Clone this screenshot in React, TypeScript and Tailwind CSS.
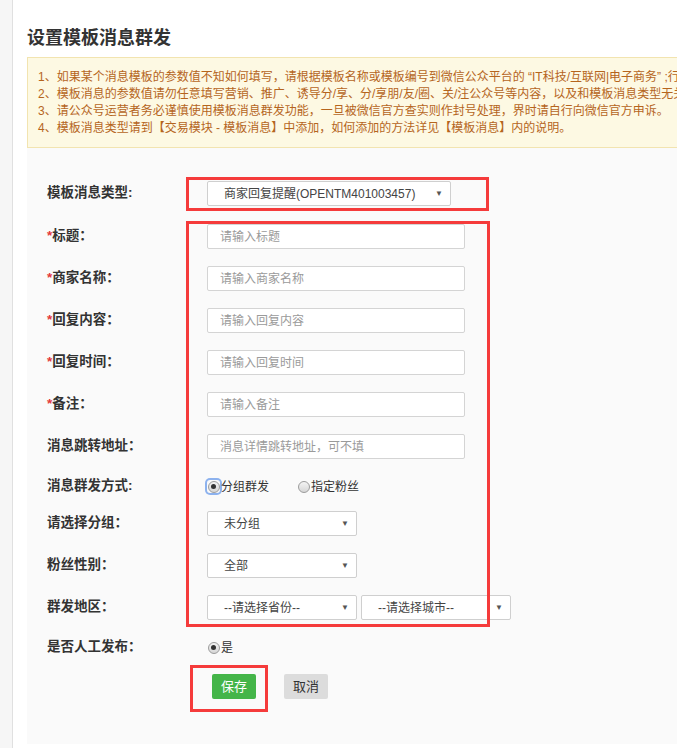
import React from "react";

const FONT = { fontFamily: '"Liberation Sans", "Noto Sans CJK SC", sans-serif' };

const Select = ({ text, w }: { text: string; w: string }) => (
  <div
    className={`${w} h-[25px] flex items-center justify-between bg-white border border-[#cfcfcf] rounded-[2px] pl-[16px] pr-[7px] text-[12px] text-[#444]`}
  >
    <span>{text}</span>
    <span className="text-[8px] text-[#555]">▼</span>
  </div>
);

const Input = ({ placeholder }: { placeholder: string }) => (
  <input
    placeholder={placeholder}
    className="w-[258px] h-[25px] bg-white border border-[#d4d4d4] rounded-[2px] pl-[12px] text-[12px] text-[#333] placeholder:text-[#9a9a9a] outline-none"
    style={FONT}
  />
);

const Radio = ({ checked, focus }: { checked?: boolean; focus?: boolean }) => (
  <span
    className={`w-[13px] h-[13px] flex items-center justify-center rounded-[3px] ${
      focus ? "ring-2 ring-[#8db2ee]" : ""
    }`}
  >
    <span className="w-[12px] h-[12px] rounded-full border border-[#9c9c9c] bg-gradient-to-b from-[#f4f4f4] to-[#d6d6d6] flex items-center justify-center">
      {checked && <span className="w-[5px] h-[5px] rounded-full bg-[#333]" />}
    </span>
  </span>
);

const Row = ({
  label,
  star,
  mt,
  colon = "：",
  children,
}: {
  label: string;
  star?: boolean;
  mt: string;
  colon?: string;
  children?: React.ReactNode;
}) => (
  <div className={`flex items-center h-[25px] ${mt}`}>
    <div className="w-[160px] text-[13.5px] font-bold text-[#333]">
      {star && <span className="text-[#e4393c]">*</span>}
      {label}
      {colon}
    </div>
    {children}
  </div>
);

export default function App() {
  return (
    <div className="w-[677px] h-[748px] overflow-hidden bg-white flex" style={FONT}>
      <div className="w-[13px] shrink-0 bg-[#f6f6f6] border-r border-[#e0e0e0]" />
      <div className="pl-[14px] w-[1000px] shrink-0 flex flex-col">
        <div className="h-[57px] pt-[26px] text-[18px] leading-[24px] font-bold text-[#333]">
          设置模板消息群发
        </div>
        <div className="border border-[#f2e4b0] bg-[#fdf9e3] pl-[10px] pt-[11px] pb-[10px] text-[12px] leading-[17px] text-[#b5651d] whitespace-nowrap">
          <p>1、如果某个消息模板的参数值不知如何填写，请根据模板名称或模板编号到微信公众平台的 “IT科技/互联网|电子商务” ;行业模板库中查看。</p>
          <p>2、模板消息的参数值请勿任意填写营销、推广、诱导分/享、分/享朋/友/圈、关/注公众号等内容，以及和模板消息类型无关的内容。</p>
          <p>3、请公众号运营者务必谨慎使用模板消息群发功能，一旦被微信官方查实则作封号处理，界时请自行向微信官方申诉。</p>
          <p>4、模板消息类型请到【交易模块 - 模板消息】中添加，如何添加的方法详见【模板消息】内的说明。</p>
        </div>
        <div className="relative bg-[#fafafa] pl-[20px] pt-[33px] h-[596px]">
          <Row label="模板消息类型" colon=":" mt="mt-0">
            <Select text="商家回复提醒(OPENTM401003457)" w="w-[244px]" />
          </Row>
          <Row label="标题" star mt="mt-[18px]">
            <Input placeholder="请输入标题" />
          </Row>
          <Row label="商家名称" star mt="mt-[17px]">
            <Input placeholder="请输入商家名称" />
          </Row>
          <Row label="回复内容" star mt="mt-[17px]">
            <Input placeholder="请输入回复内容" />
          </Row>
          <Row label="回复时间" star mt="mt-[17px]">
            <Input placeholder="请输入回复时间" />
          </Row>
          <Row label="备注" star mt="mt-[17px]">
            <Input placeholder="请输入备注" />
          </Row>
          <Row label="消息跳转地址" mt="mt-[17px]">
            <Input placeholder="消息详情跳转地址，可不填" />
          </Row>
          <Row label="消息群发方式" colon=":" mt="mt-[15px]">
            <div className="flex items-center text-[12px] text-[#333]">
              <Radio checked focus />
              <span className="ml-[1px]">分组群发</span>
              <span className="ml-[28px]">
                <Radio />
              </span>
              <span className="ml-[1px]">指定粉丝</span>
            </div>
          </Row>
          <Row label="请选择分组" mt="mt-[12px]">
            <Select text="未分组" w="w-[150px]" />
          </Row>
          <Row label="粉丝性别" mt="mt-[17px]">
            <Select text="全部" w="w-[150px]" />
          </Row>
          <Row label="群发地区" mt="mt-[17px]">
            <div className="flex gap-[4px]">
              <Select text="--请选择省份--" w="w-[150px]" />
              <Select text="--请选择城市--" w="w-[150px]" />
            </div>
          </Row>
          <Row label="是否人工发布" mt="mt-[15px]">
            <div className="flex items-center text-[12px] text-[#333]">
              <Radio checked />
              <span className="ml-[1px]">是</span>
            </div>
          </Row>
          <div className="flex items-center mt-[14px] pl-[165px] gap-[28px]">
            <button className="w-[44px] h-[25px] rounded-[2px] bg-[#44b549] text-white text-[13px]">
              保存
            </button>
            <button className="w-[44px] h-[25px] rounded-[2px] bg-[#dcdcdc] text-[#333] text-[13px]">
              取消
            </button>
          </div>

          {/* red highlight frames */}
          <div className="absolute left-[159px] top-[29px] w-[303px] h-[34px] border-[3px] border-[#f53b3b]" />
          <div className="absolute left-[159px] top-[73px] w-[304px] h-[406px] border-[3px] border-[#f53b3b]" />
          <div className="absolute left-[163px] top-[517px] w-[78px] h-[47px] border-[3px] border-[#f53b3b]" />
        </div>
      </div>
    </div>
  );
}
